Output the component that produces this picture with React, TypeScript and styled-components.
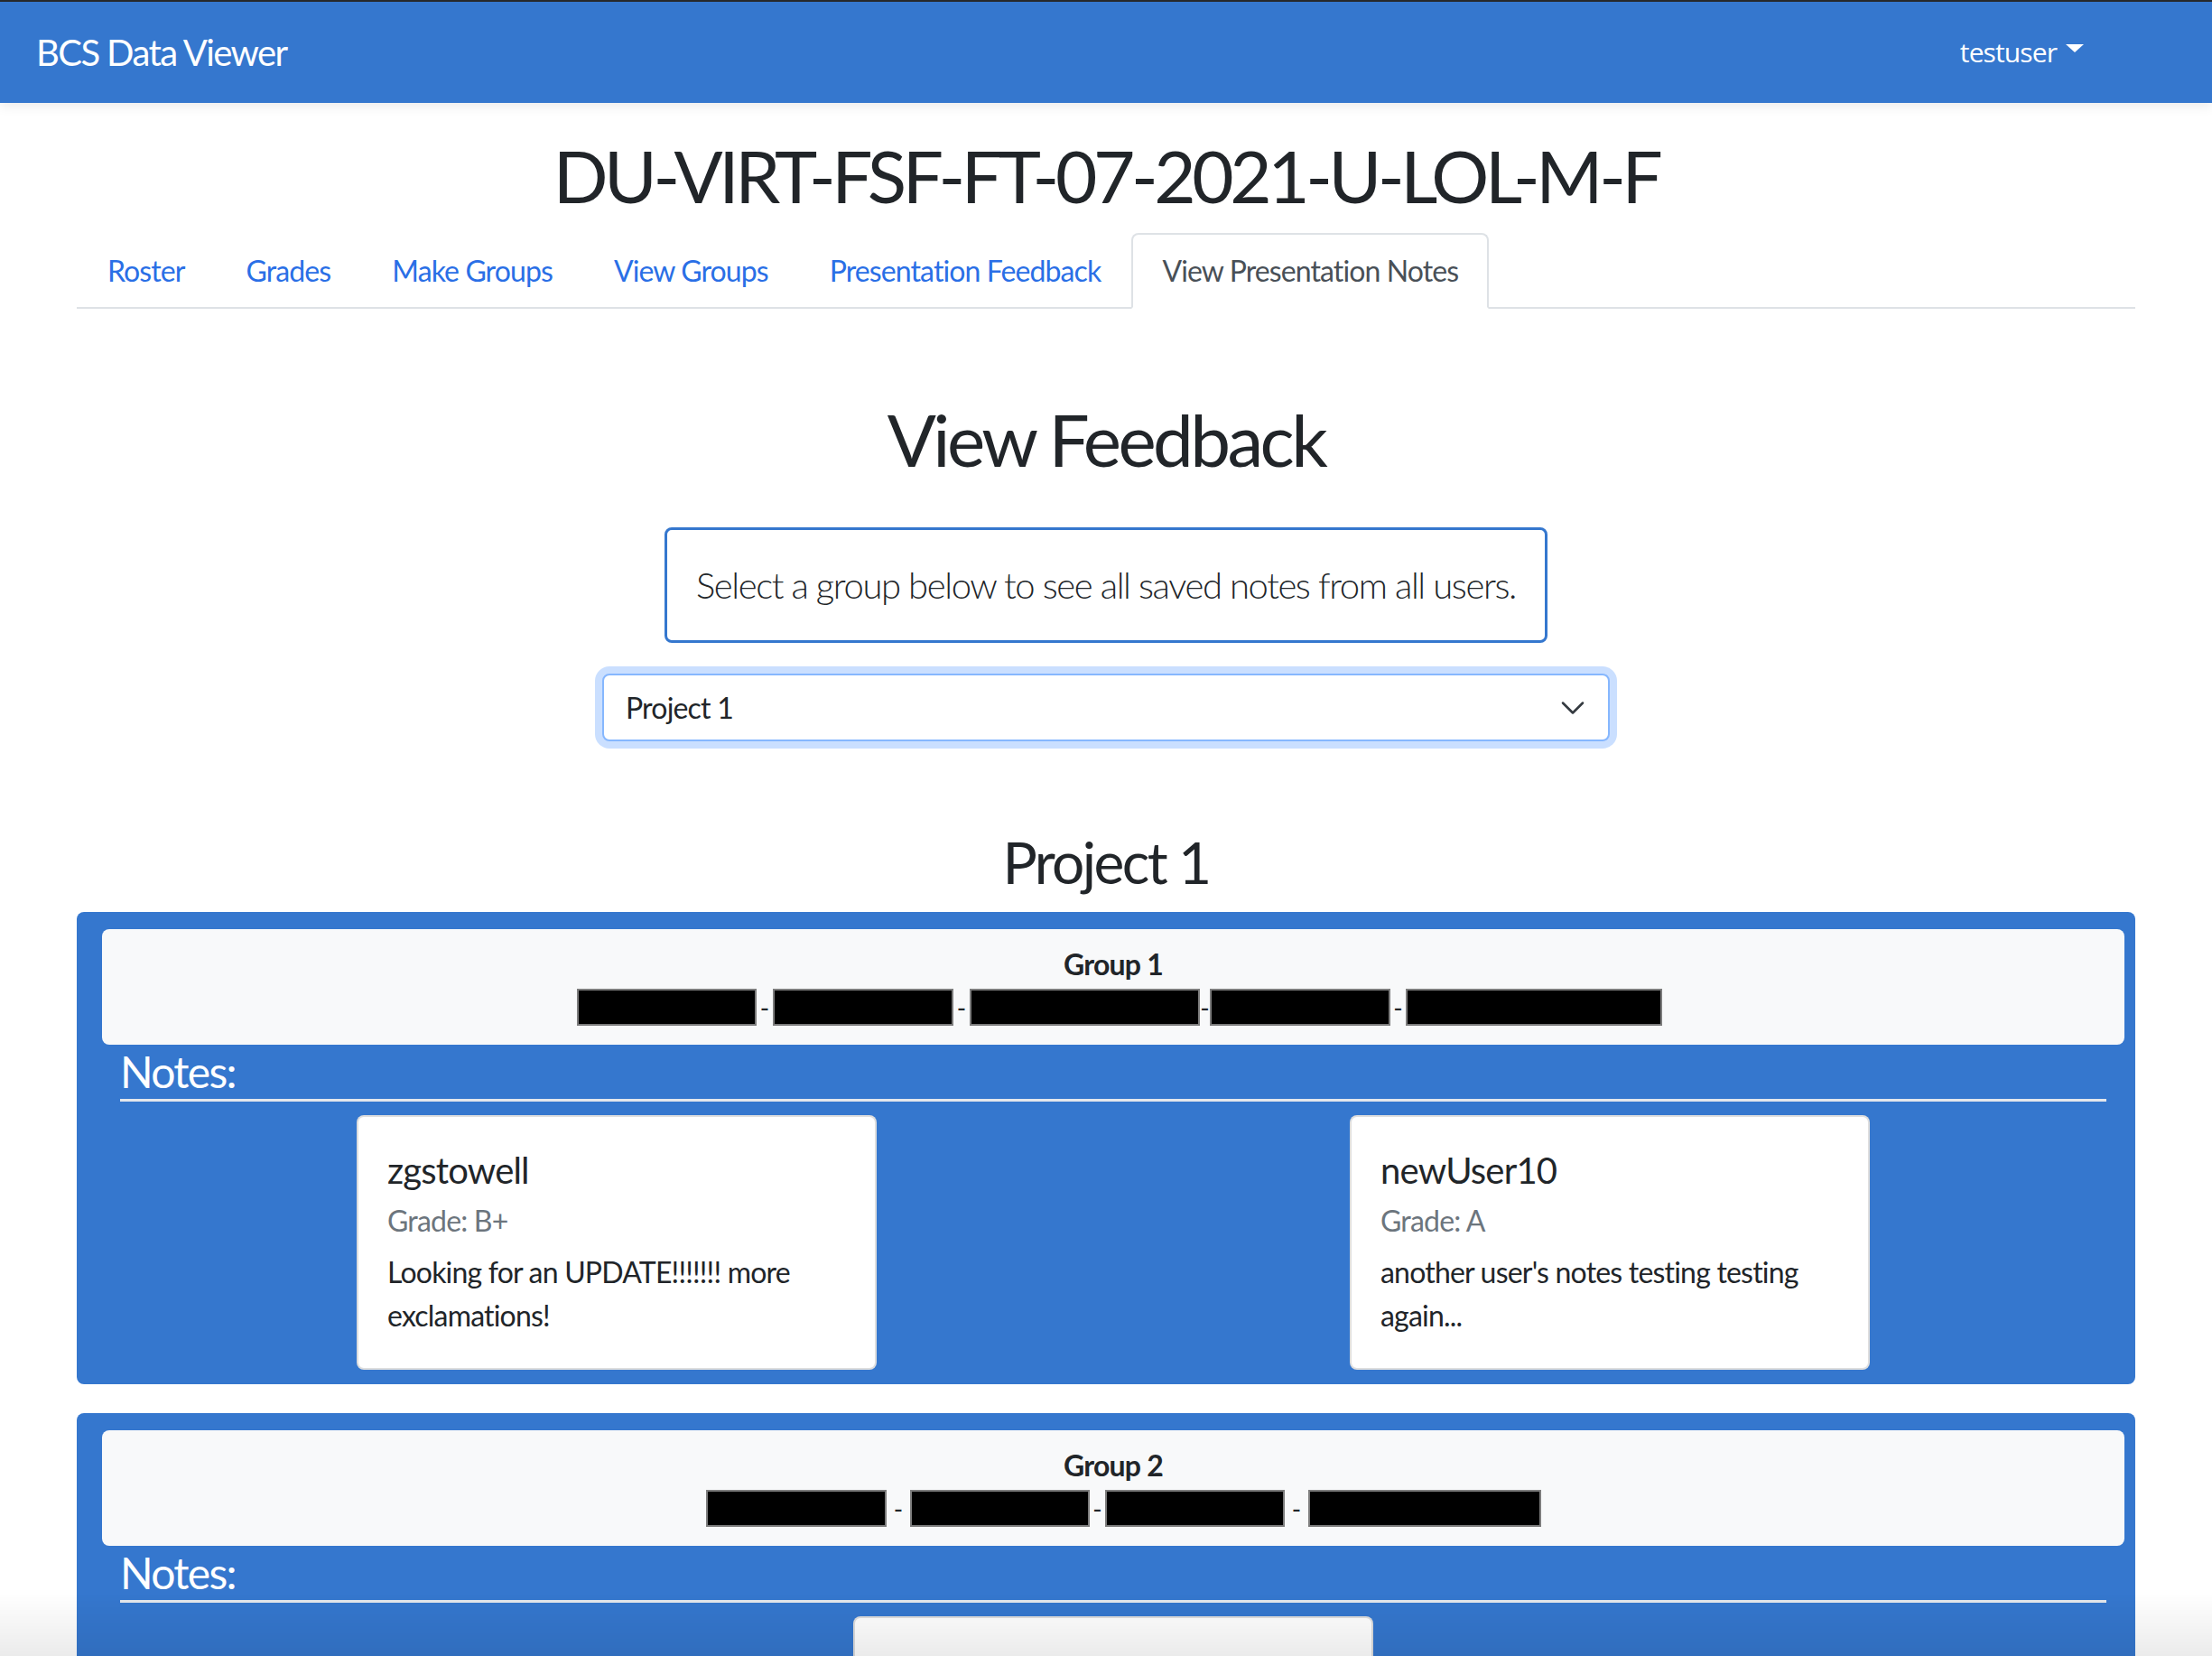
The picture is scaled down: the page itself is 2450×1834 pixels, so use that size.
import React from "react";
import styled, { createGlobalStyle } from "styled-components";

const BLUE = "#3577ce";
const FONT = `"Lato", "Noto Sans", sans-serif`;

const GlobalStyle = createGlobalStyle`
  html, body {
    margin: 0;
    padding: 0;
    background: #ffffff;
    overflow: hidden;
    scrollbar-width: none;
  }
  body::-webkit-scrollbar { display: none; }
  body {
    font-family: ${FONT};
    font-size: 32px;
    line-height: 1.5;
    letter-spacing: -0.025em;
    color: #212529;
  }
  *, *::before, *::after { box-sizing: border-box; }
`;

const Navbar = styled.nav`
  position: relative;
  z-index: 2;
  height: 114px;
  border-top: 2px solid #26282b;
  background: ${BLUE};
  display: flex;
  align-items: center;
  justify-content: space-between;
  padding: 0 142px 0 40px;
  box-shadow: 0 4px 12px rgba(0, 0, 0, 0.08);
`;

const Brand = styled.a`
  font-size: 40px;
  line-height: 60px;
  letter-spacing: -0.04em;
  color: #ffffff;
  text-decoration: none;
`;

const UserToggle = styled.a`
  font-family: "Open Sans", "Noto Sans", sans-serif;
  font-size: 30px;
  line-height: 48px;
  letter-spacing: -0.03em;
  color: #ffffff;
  text-decoration: none;
  display: inline-flex;
  align-items: center;

  &::after {
    content: "";
    display: inline-block;
    margin-left: 10px;
    margin-top: -10px;
    border-top: 9px solid #ffffff;
    border-left: 10px solid transparent;
    border-right: 10px solid transparent;
  }
`;

const Container = styled.main`
  width: 2280px;
  margin: 0 auto;
`;

const CourseTitle = styled.h1`
  margin: 32px 0 16px;
  font-size: 80px;
  font-weight: 400;
  line-height: 1.2;
  letter-spacing: -0.055em;
  text-align: center;
`;

const TabList = styled.ul`
  display: flex;
  list-style: none;
  margin: 0;
  padding: 0;
  border-bottom: 2px solid #dee2e6;
`;

const Tab = styled.li<{ $active?: boolean }>`
  margin-bottom: -2px;
  padding: 16px 32px;
  font-size: 32px;
  line-height: 48px;
  letter-spacing: -0.028em;
  border: 2px solid ${(p) => (p.$active ? "#dee2e6" : "transparent")};
  border-bottom-color: ${(p) => (p.$active ? "#ffffff" : "transparent")};
  border-radius: 8px 8px 0 0;
  background: ${(p) => (p.$active ? "#ffffff" : "transparent")};
  color: ${(p) => (p.$active ? "#495057" : "#2a6fe6")};
  cursor: pointer;
`;

const PageHeading = styled.h1`
  margin: 96px 0 50px;
  font-size: 80px;
  font-weight: 400;
  line-height: 1.2;
  letter-spacing: -0.045em;
  text-align: center;
`;

const Center = styled.div`
  display: flex;
  flex-direction: column;
  align-items: center;
`;

const InfoBox = styled.p`
  margin: 0;
  padding: 31px 32px;
  border: 3px solid ${BLUE};
  border-radius: 8px;
  font-size: 40px;
  font-weight: 300;
  line-height: 60px;
  letter-spacing: -0.035em;
`;

const SelectWrap = styled.div`
  position: relative;
  width: 1116px;
  margin-top: 34px;
`;

const Select = styled.select`
  appearance: none;
  -webkit-appearance: none;
  width: 100%;
  height: 75px;
  padding: 0 72px 0 24px;
  font-family: ${FONT};
  font-size: 32px;
  letter-spacing: -0.025em;
  color: #212529;
  background: #ffffff;
  border: 2px solid #86b7fe;
  border-radius: 8px;
  outline: none;
  box-shadow: 0 0 0 8px rgba(13, 110, 253, 0.22);
`;

const Chevron = styled.svg`
  position: absolute;
  right: 26px;
  top: 50%;
  width: 30px;
  height: 22px;
  transform: translateY(-50%);
  pointer-events: none;
`;

const ProjectHeading = styled.h2`
  margin: 96px 0 16px;
  font-size: 64px;
  font-weight: 400;
  line-height: 1.2;
  letter-spacing: -0.04em;
  text-align: center;
`;

const GroupPanel = styled.section`
  background: ${BLUE};
  border-radius: 8px;
  padding: 19px 12px 16px 28px;
  margin-bottom: 32px;
`;

const GroupHeader = styled.div`
  background: #f8f9fa;
  border-radius: 8px;
  padding: 15px 16px 17px;
  text-align: center;
`;

const GroupName = styled.div`
  font-weight: 700;
  font-size: 32px;
  line-height: 48px;
`;

const MemberLine = styled.div<{ $offset: number }>`
  display: flex;
  justify-content: center;
  align-items: center;
  height: 48px;
  padding-left: ${(p) => p.$offset}px;
`;

const Redacted = styled.span`
  display: block;
  height: 41px;
  background: #000000;
  border: 2px solid #7d7d7d;
`;

const Separator = styled.span`
  display: flex;
  justify-content: center;
  align-items: center;
  height: 41px;
  font-size: 28px;
  line-height: 1;
  color: #212529;
  overflow: hidden;
`;

const NotesArea = styled.div`
  margin: 0 20px 0 20px;
`;

const NotesTitle = styled.h4`
  margin: 0;
  padding: 1px 0 2px;
  font-size: 48px;
  font-weight: 400;
  line-height: 1.2;
  letter-spacing: -0.035em;
  color: #ffffff;
  border-bottom: 3px solid #e4e7ec;
`;

const CardRow = styled.div`
  display: flex;
  margin-top: 15px;
`;

const CardColumn = styled.div`
  flex: 1;
  display: flex;
  justify-content: center;
`;

const Card = styled.article`
  width: 576px;
  background: #ffffff;
  border: 2px solid rgba(0, 0, 0, 0.13);
  border-radius: 8px;
  padding: 32px 32px 34px;
`;

const CardTitle = styled.h5`
  margin: 0 0 13px;
  padding-top: 3px;
  font-size: 40px;
  font-weight: 400;
  line-height: 1.2;
`;

const CardSubtitle = styled.h6`
  margin: 0 0 13px;
  font-size: 32px;
  font-weight: 400;
  line-height: 1.2;
  color: #6c757d;
`;

const CardText = styled.p`
  margin: 0;
  font-size: 32px;
  line-height: 48px;
`;

const BottomShade = styled.div`
  position: fixed;
  left: 0;
  right: 0;
  bottom: 0;
  height: 70px;
  pointer-events: none;
  background: linear-gradient(to bottom, rgba(0, 0, 0, 0), rgba(0, 0, 0, 0.08));
`;

type Note = { user: string; grade: string; text: string };
type Group = {
  name: string;
  members: number[];
  gaps: number[];
  offset: number;
  notes: Note[];
};

const groups: Group[] = [
  {
    name: "Group 1",
    members: [199, 200, 255, 200, 284],
    gaps: [18, 18, 11, 17],
    offset: 13,
    notes: [
      { user: "zgstowell", grade: "Grade: B+", text: "Looking for an UPDATE!!!!!!! more exclamations!" },
      { user: "newUser10", grade: "Grade: A", text: "another user's notes testing testing again..." },
    ],
  },
  {
    name: "Group 2",
    members: [200, 199, 199, 258],
    gaps: [26, 17, 26],
    offset: 22,
    notes: [{ user: "zgstowell", grade: "Grade: A-", text: "Great teamwork and a clear demo." }],
  },
];

const tabs = ["Roster", "Grades", "Make Groups", "View Groups", "Presentation Feedback", "View Presentation Notes"];

function Members({ group }: { group: Group }) {
  const items: React.ReactNode[] = [];
  group.members.forEach((w, i) => {
    items.push(<Redacted key={`m${i}`} style={{ width: w }} />);
    if (i < group.gaps.length) {
      items.push(
        <Separator key={`s${i}`} style={{ width: group.gaps[i] }}>
          -
        </Separator>
      );
    }
  });
  return <MemberLine $offset={group.offset}>{items}</MemberLine>;
}

export default function App() {
  return (
    <>
      <GlobalStyle />
      <Navbar>
        <Brand href="#">BCS Data Viewer</Brand>
        <UserToggle href="#">testuser</UserToggle>
      </Navbar>
      <Container>
        <CourseTitle>DU-VIRT-FSF-FT-07-2021-U-LOL-M-F</CourseTitle>
        <TabList>
          {tabs.map((t) => (
            <Tab key={t} $active={t === "View Presentation Notes"}>
              {t}
            </Tab>
          ))}
        </TabList>

        <PageHeading>View Feedback</PageHeading>
        <Center>
          <InfoBox>Select a group below to see all saved notes from all users.</InfoBox>
          <SelectWrap>
            <Select defaultValue="Project 1">
              <option>Project 1</option>
              <option>Project 2</option>
              <option>Project 3</option>
            </Select>
            <Chevron viewBox="0 0 16 12" aria-hidden="true">
              <path d="M2 3l6 6 6-6" fill="none" stroke="#343a40" strokeWidth="1.4" strokeLinecap="round" strokeLinejoin="round" />
            </Chevron>
          </SelectWrap>
        </Center>

        <ProjectHeading>Project 1</ProjectHeading>

        {groups.map((g) => (
          <GroupPanel key={g.name}>
            <GroupHeader>
              <GroupName>{g.name}</GroupName>
              <Members group={g} />
            </GroupHeader>
            <NotesArea>
              <NotesTitle>Notes:</NotesTitle>
              <CardRow>
                {g.notes.map((n) => (
                  <CardColumn key={n.user + n.grade}>
                    <Card>
                      <CardTitle>{n.user}</CardTitle>
                      <CardSubtitle>{n.grade}</CardSubtitle>
                      <CardText>{n.text}</CardText>
                    </Card>
                  </CardColumn>
                ))}
              </CardRow>
            </NotesArea>
          </GroupPanel>
        ))}
      </Container>
      <BottomShade />
    </>
  );
}
